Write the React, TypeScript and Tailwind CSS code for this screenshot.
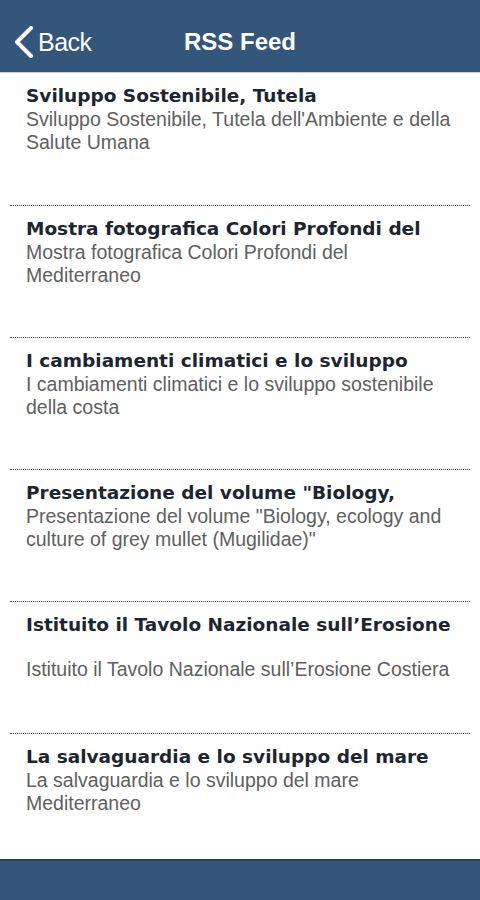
import React from "react";

type Item = { title: string; desc: string; gap?: boolean };

const items: Item[] = [
  {
    title: "Sviluppo Sostenibile, Tutela",
    desc: "Sviluppo Sostenibile, Tutela dell'Ambiente e della Salute Umana",
  },
  {
    title: "Mostra fotografica Colori Profondi del",
    desc: "Mostra fotografica Colori Profondi del Mediterraneo",
  },
  {
    title: "I cambiamenti climatici e lo sviluppo",
    desc: "I cambiamenti climatici e lo sviluppo sostenibile della costa",
  },
  {
    title: "Presentazione del volume \"Biology,",
    desc: "Presentazione del volume \"Biology, ecology and culture of grey mullet (Mugilidae)\"",
  },
  {
    title: "Istituito il Tavolo Nazionale sull\u2019Erosione",
    desc: "Istituito il Tavolo Nazionale sull\u2019Erosione Costiera",
    gap: true,
  },
  {
    title: "La salvaguardia e lo sviluppo del mare",
    desc: "La salvaguardia e lo sviluppo del mare Mediterraneo",
  },
];

const FeedRow = ({ item, first, last }: { item: Item; first: boolean; last: boolean }) => (
  <div
    className={
      last
        ? "mx-[10px] flex-1 pt-[11px] pl-[16px] pr-[4px]"
        : (first ? "h-[133px] " : "h-[132px] ") +
          "mx-[10px] shrink-0 border-b border-dotted border-[#444] pt-[11px] pl-[16px] pr-[4px]"
    }
  >
    <div className="whitespace-nowrap font-['DejaVu_Sans',sans-serif] text-[18.5px] font-bold leading-[24px] text-[#1c2530]">
      {item.title}
    </div>
    <div
      className={
        "font-['Liberation_Sans',Arial,sans-serif] text-[19.5px] leading-[23px] text-[#606060]" +
        (item.gap ? " mt-[21px]" : "")
      }
    >
      {item.desc}
    </div>
  </div>
);

export default function App() {
  return (
    <div className="flex h-[900px] w-[480px] flex-col overflow-hidden bg-white">
      {/* top bar */}
      <header className="relative flex h-[73px] shrink-0 items-center border-b border-[#c9ced3] bg-[#34567a] pt-[12px]">
        <button className="flex items-center pl-[14px] text-white">
          <svg width="20" height="32" viewBox="0 0 20 32" fill="none">
            <path
              d="M17 2 L3 16 L17 30"
              stroke="white"
              strokeWidth="4"
              strokeLinecap="round"
              strokeLinejoin="round"
            />
          </svg>
          <span className="ml-[4px] font-['Liberation_Sans',Arial,sans-serif] text-[25px] leading-none tracking-[-0.5px]">
            Back
          </span>
        </button>
        <h1 className="pointer-events-none absolute left-0 right-0 text-center font-['Liberation_Sans',Arial,sans-serif] text-[24px] font-bold leading-none text-white">
          RSS Feed
        </h1>
      </header>

      <main className="flex flex-1 flex-col">
        {items.map((it, i) => (
          <FeedRow key={i} item={it} first={i === 0} last={i === items.length - 1} />
        ))}
      </main>

      <footer className="h-[41px] shrink-0 border-t-2 border-[#1e4658] bg-[#34567a]" />
    </div>
  );
}
